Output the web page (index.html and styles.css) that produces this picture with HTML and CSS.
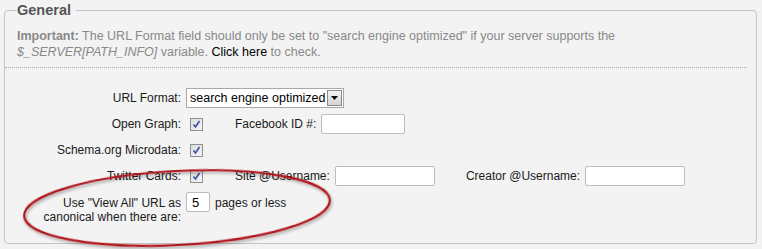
FILE: index.html
```
<!DOCTYPE html>
<html>
<head>
    <title>SEO Settings</title>
    <link rel="stylesheet" href="styles.css">
</head>
<body>
    <fieldset class="panel">
        <legend>General</legend>
        <p class="notice"><b>Important:</b> The URL Format field should only be set to "search engine optimized" if your server supports the
            <i>$_SERVER[PATH_INFO]</i> variable. <a href="#">Click here</a> to check.</p>

        <div class="settings">
            <div class="row">
                <label class="lbl">URL Format:</label>
                <div class="select">
                    <span class="select-text">search engine optimized</span>
                    <span class="select-btn">
                        <svg width="7" height="4" viewBox="0 0 7 4"><path d="M0 0h7L3.5 4z" fill="#000"/></svg>
                    </span>
                </div>
            </div>
            <div class="row">
                <label class="lbl">Open Graph:</label>
                <span class="check-cell"><span class="check"><svg width="11" height="11" viewBox="0 0 11 11"><path d="M2.5 5.5l2 2.5 4-6" fill="none" stroke="#3a4fa0" stroke-width="1.6"/></svg></span></span>
                <label class="sub-lbl">Facebook ID #:</label>
                <input type="text" class="field fb">
            </div>
            <div class="row">
                <label class="lbl">Schema.org Microdata:</label>
                <span class="check-cell"><span class="check"><svg width="11" height="11" viewBox="0 0 11 11"><path d="M2.5 5.5l2 2.5 4-6" fill="none" stroke="#3a4fa0" stroke-width="1.6"/></svg></span></span>
            </div>
            <div class="row">
                <label class="lbl">Twitter Cards:</label>
                <span class="check-cell"><span class="check"><svg width="11" height="11" viewBox="0 0 11 11"><path d="M2.5 5.5l2 2.5 4-6" fill="none" stroke="#3a4fa0" stroke-width="1.6"/></svg></span></span>
                <label class="sub-lbl">Site @Username:</label>
                <input type="text" class="field user">
                <label class="sub-lbl creator">Creator @Username:</label>
                <input type="text" class="field user">
            </div>
            <div class="row top">
                <label class="lbl two-line">Use "View All" URL as canonical when there are:</label>
                <input type="text" class="field small" value="5">
                <span class="after">pages or less</span>
            </div>
        </div>
    </fieldset>

    <!-- red highlight drawn over the form -->
    <svg class="mark" width="762" height="249" viewBox="0 0 762 249">
        <defs>
            <filter id="shade" x="-10%" y="-30%" width="120%" height="160%">
                <feDropShadow dx="1" dy="2" stdDeviation="1.6" flood-color="#000" flood-opacity="0.35"/>
            </filter>
        </defs>
        <ellipse cx="177" cy="208" rx="153" ry="37" transform="rotate(-3 177 208)" fill="none" stroke="#b0141a" stroke-width="2.2" filter="url(#shade)"/>
    </svg>
</body>
</html>
```

FILE: styles.css
```
body {
    margin: 0;
    background-color: #f3f3f3;
    font-family: "Liberation Sans", Arial, sans-serif;
    font-size: 12px;
    color: #1a1a1a;
    position: relative;
    height: 249px;
    overflow: hidden;
}
.panel {
    margin: 2px 5px 0 4px;
    padding: 4px 12px 18px 12px;
    border: 1px solid #c4c4c4;
    border-radius: 4px;
    box-sizing: border-box;
    height: 242px;
}
.panel legend {
    padding: 0 5px 0 1px;
    margin-left: -1px;
    font-size: 14.5px;
    font-weight: bold;
    color: #555;
    line-height: 16px;
}
.notice {
    margin: 0 -3px 0 -12px;
    padding: 6px 0 7px 12px;
    font-size: 12.5px;
    line-height: 16px;
    color: #888;
    border-bottom: 1px dotted #aaa;
}
.notice a {
    color: #000;
    text-decoration: none;
}
.settings {
    margin-top: 20px;
    display: flex;
    flex-direction: column;
    gap: 6px;
}
.row {
    display: flex;
    align-items: center;
    min-height: 20px;
}
.row.top {
    align-items: flex-start;
}
.lbl {
    width: 164px;
    margin-right: 5px;
    text-align: right;
}
.two-line {
    line-height: 14px;
    padding-top: 4px;
    padding-left: 18px;
    box-sizing: border-box;
}
.select {
    width: 158px;
    height: 20px;
    box-sizing: border-box;
    border: 1px solid #a8a8a8;
    background-color: #fff;
    display: flex;
    align-items: center;
    font-size: 12.5px;
    white-space: nowrap;
    overflow: hidden;
}
.select-text {
    flex: 1;
    padding-left: 3px;
    color: #000;
}
.select-btn {
    width: 15px;
    height: 16px;
    margin-right: 1px;
    border: 1px solid #8a8a8a;
    box-sizing: border-box;
    background: linear-gradient(#f4f4f4, #d4d4d4);
    display: flex;
    align-items: center;
    justify-content: center;
}
.check-cell {
    width: 49px;
    display: flex;
}
.check {
    width: 13px;
    height: 13px;
    margin-left: 4px;
    box-sizing: border-box;
    border: 1px solid #8e8f8f;
    background: linear-gradient(135deg, #dcdcdc, #f6f6f6);
    display: flex;
    align-items: center;
    justify-content: center;
}
.sub-lbl {
    margin-right: 5px;
}
.creator {
    margin-left: 31px;
}
.field {
    height: 20px;
    box-sizing: border-box;
    border: 1px solid #bdbdbd;
    border-radius: 2px;
    background-color: #fff;
    margin: 0;
    padding: 0 4px;
    font-family: "Liberation Sans", Arial, sans-serif;
    font-size: 13px;
}
.fb {
    width: 84px;
}
.user {
    width: 100px;
}
.small {
    width: 24px;
    padding: 0 5px;
}
.after {
    margin-left: 5px;
    line-height: 14px;
    padding-top: 4px;
}
.mark {
    position: absolute;
    left: 0;
    top: 0;
    pointer-events: none;
}
```
